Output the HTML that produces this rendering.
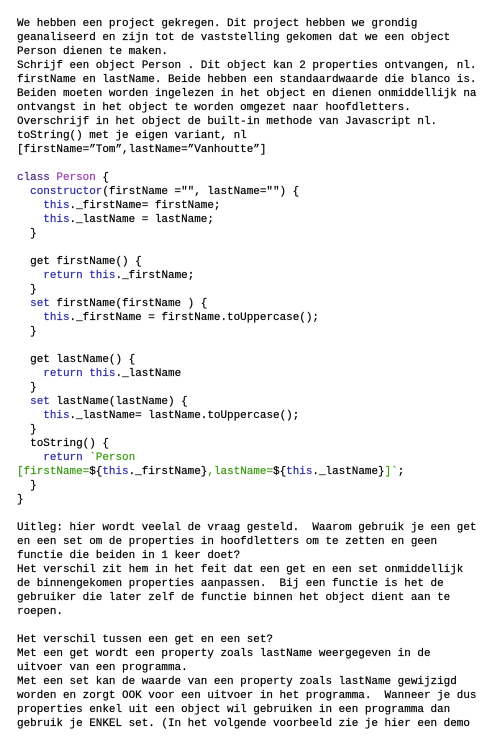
<!DOCTYPE html>
<html><head><meta charset="utf-8"><style>
html,body{margin:0;padding:0;background:#fff;width:490px;height:746px;overflow:hidden}
pre{margin:0;position:absolute;left:17px;top:17px;font-family:"Liberation Mono",monospace;font-size:10.95px;line-height:14px;color:#000;white-space:pre;-webkit-text-stroke:0.2px currentColor}
.k{color:#4a2a86}.p{color:#9a3fb0}.b{color:#2c2ca8}.g{color:#3a9a10}
</style></head><body><pre>We hebben een project gekregen. Dit project hebben we grondig
geanaliseerd en zijn tot de vaststelling gekomen dat we een object
Person dienen te maken.
Schrijf een object Person . Dit object kan 2 properties ontvangen, nl.
firstName en lastName. Beide hebben een standaardwaarde die blanco is.
Beiden moeten worden ingelezen in het object en dienen onmiddellijk na
ontvangst in het object te worden omgezet naar hoofdletters.
Overschrijf in het object de built-in methode van Javascript nl.
toString() met je eigen variant, nl
[firstName=”Tom”,lastName=”Vanhoutte”]

<span class="k">class</span> <span class="p">Person</span> {
  <span class="b">constructor</span>(firstName ="", lastName="") {
    <span class="b">this</span>._firstName= firstName;
    <span class="b">this</span>._lastName = lastName;
  }

  get firstName() {
    <span class="b">return</span> <span class="b">this</span>._firstName;
  }
  <span class="b">set</span> firstName(firstName ) {
    <span class="b">this</span>._firstName = firstName.toUppercase();
  }

  get lastName() {
    <span class="b">return</span> <span class="b">this</span>._lastName
  }
  <span class="b">set</span> lastName(lastName) {
    <span class="b">this</span>._lastName= lastName.toUppercase();
  }
  toString() {
    <span class="b">return</span> <span class="g">`Person</span>
<span class="g">[firstName=</span>${<span class="b">this</span>._firstName}<span class="g">,lastName=</span>${<span class="b">this</span>._lastName}<span class="g">]`</span>;
  }
}

Uitleg: hier wordt veelal de vraag gesteld.  Waarom gebruik je een get
en een set om de properties in hoofdletters om te zetten en geen
functie die beiden in 1 keer doet?
Het verschil zit hem in het feit dat een get en een set onmiddellijk
de binnengekomen properties aanpassen.  Bij een functie is het de
gebruiker die later zelf de functie binnen het object dient aan te
roepen.

Het verschil tussen een get en een set?
Met een get wordt een property zoals lastName weergegeven in de
uitvoer van een programma.
Met een set kan de waarde van een property zoals lastName gewijzigd
worden en zorgt OOK voor een uitvoer in het programma.  Wanneer je dus
properties enkel uit een object wil gebruiken in een programma dan
gebruik je ENKEL set. (In het volgende voorbeeld zie je hier een demo</pre></body></html>
